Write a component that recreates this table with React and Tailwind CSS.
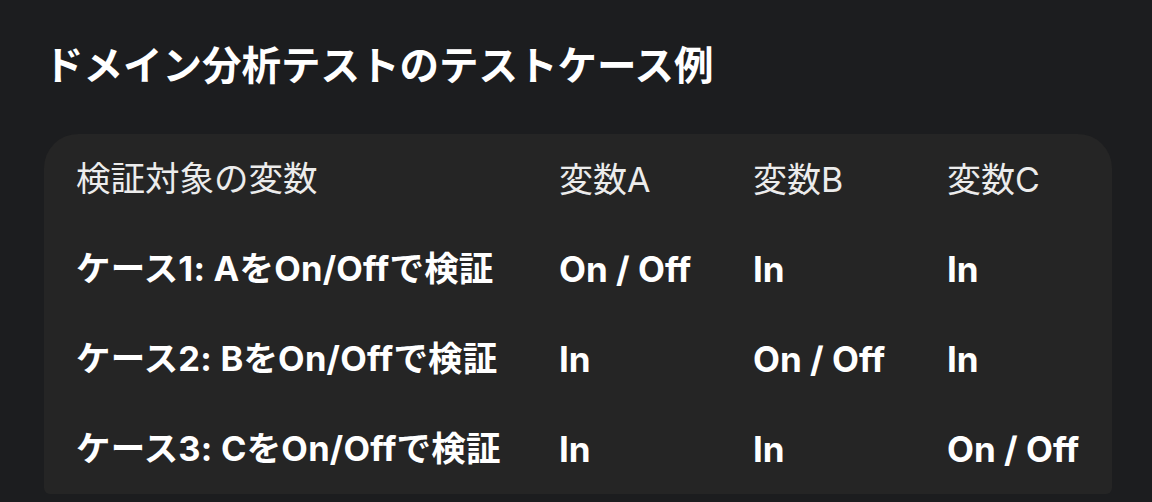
export default function App() {
  const font = { fontFamily: 'Inter, "Noto Sans CJK JP", sans-serif' };
  const rows = [
    ["ケース1: AをOn/Offで検証", "On / Off", "In", "In"],
    ["ケース2: BをOn/Offで検証", "In", "On / Off", "In"],
    ["ケース3: CをOn/Offで検証", "In", "In", "On / Off"],
  ];
  return (
    <div className="h-[502px] w-[1152px] overflow-hidden bg-[#1c1d1f] px-[44px]" style={font}>
      <h1 className="pt-[33px] text-[39.5px] font-bold leading-[60px] text-white" style={{ fontFamily: '"Noto Sans CJK JP", sans-serif' }}>
        ドメイン分析テストのテストケース例
      </h1>
      <div className="mt-[41px] w-[1068px] rounded-t-[34px] rounded-b-[6px] bg-[#252525]">
        <div className="grid grid-cols-[515px_194px_194px_165px]">
          <div className="flex h-[90px] items-center pl-[32px] text-[34.5px] text-[#ececec]">検証対象の変数</div>
          <div className="flex h-[90px] items-center text-[34px] text-[#ececec]">変数A</div>
          <div className="flex h-[90px] items-center text-[34px] text-[#ececec]">変数B</div>
          <div className="flex h-[90px] items-center text-[34px] text-[#ececec]">変数C</div>
          {rows.map((r, i) => (
            <>
              <div key={i + "a"} className="flex h-[90px] items-center pl-[32px] text-[34.5px] tracking-[0.2px] font-bold text-white">{r[0]}</div>
              <div key={i + "b"} className="flex h-[90px] items-center text-[35px] font-bold text-white">{r[1]}</div>
              <div key={i + "c"} className="flex h-[90px] items-center text-[35px] font-bold text-white">{r[2]}</div>
              <div key={i + "d"} className="flex h-[90px] items-center text-[35px] font-bold text-white">{r[3]}</div>
            </>
          ))}
        </div>
      </div>
    </div>
  );
}
